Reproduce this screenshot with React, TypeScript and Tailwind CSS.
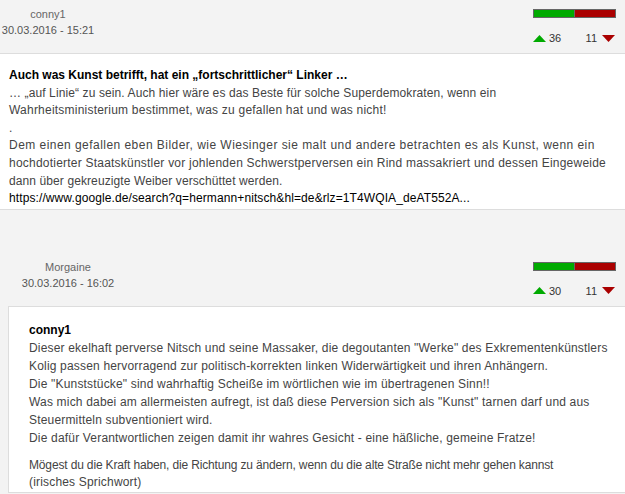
import React from "react"

interface VoteProps {
  up: number
  down: number
}

function Votes({ up, down }: VoteProps) {
  return (
    <div className="flex w-[83px] flex-col">
      <div className="flex h-[9px] w-[83px] border border-[#666]">
        <div className="h-full w-1/2 border-r border-[#666] bg-[#00aa00]"></div>
        <div className="h-full w-1/2 bg-[#aa0000]"></div>
      </div>
      <div className="mt-[13px] flex items-center justify-between text-[11px] leading-[14px] text-[#333]">
        <div className="flex items-center">
          <svg width="13" height="7" viewBox="0 0 13 7">
            <polygon points="0,7 6.5,0 13,7" fill="#00aa00" />
          </svg>
          <span className="ml-[3px]">{up}</span>
        </div>
        <div className="flex items-center">
          <span className="mr-[5px]">{down}</span>
          <svg width="13" height="7" viewBox="0 0 13 7" className="mr-[1px]">
            <polygon points="0,0 13,0 6.5,7" fill="#aa0000" />
          </svg>
        </div>
      </div>
    </div>
  )
}

interface HeaderProps {
  user: string
  date: string
  up: number
  down: number
  indent?: boolean
}

function CommentHeader({ user, date, up, down, indent }: HeaderProps) {
  return (
    <div className="flex h-[53px] items-start justify-between pr-[9px]">
      <div
        className={`${indent ? "ml-[20px]" : ""} flex w-[96px] flex-col items-center pt-[6px] text-[11px] leading-[16px]`}
      >
        <span className="text-[#666]">{user}</span>
        <span className="text-[#555]">{date}</span>
      </div>
      <div className="pt-[9px]">
        <Votes up={up} down={down} />
      </div>
    </div>
  )
}

export default function App() {
  return (
    <div className="h-[494px] w-[625px] overflow-hidden bg-[#f3f3f3] font-['Liberation_Sans',Arial,sans-serif]">
      {/* First comment */}
      <div className="border-b border-[#ddd]">
        <CommentHeader user="conny1" date="30.03.2016 - 15:21" up={36} down={11} />
      </div>
      <div className="whitespace-nowrap border-b border-[#ddd] bg-white px-[9px] pb-[1px] pt-[13px] text-[12px] leading-[17.6px] text-[#444]">
        <div className="font-bold text-black">Auch was Kunst betrifft, hat ein „fortschrittlicher“ Linker …</div>
        <div className="tracking-[0.11px]">… „auf Linie“ zu sein. Auch hier wäre es das Beste für solche Superdemokraten, wenn ein</div>
        <div className="tracking-[0.22px]">Wahrheitsministerium bestimmet, was zu gefallen hat und was nicht!</div>
        <div>.</div>
        <div className="tracking-[0.46px]">Dem einen gefallen eben Bilder, wie Wiesinger sie malt und andere betrachten es als Kunst, wenn ein</div>
        <div className="tracking-[0.22px]">hochdotierter Staatskünstler vor johlenden Schwerstperversen ein Rind massakriert und dessen Eingeweide</div>
        <div className="tracking-[0.1px]">dann über gekreuzigte Weiber verschüttet werden.</div>
        <div className="tracking-[0.1px] text-black">https://www.google.de/search?q=hermann+nitsch&amp;hl=de&amp;rlz=1T4WQIA_deAT552A...</div>
      </div>

      {/* Reply */}
      <div className="pt-[43px]">
        <CommentHeader user="Morgaine" date="30.03.2016 - 16:02" up={30} down={11} indent />
        <div className="ml-[8px] w-[640px] whitespace-nowrap border border-[#ddd] bg-white pl-[20px] pt-[14px] text-[12px] leading-[18px] tracking-[0.18px] text-[#444]">
          <div className="font-bold tracking-normal text-black">conny1</div>
          <p>
            Dieser ekelhaft perverse Nitsch und seine Massaker, die degoutanten "Werke" des Exkrementenkünstlers
            <br />
            Kolig passen hervorragend zur politisch-korrekten linken Widerwärtigkeit und ihren Anhängern.
            <br />
            Die "Kunststücke" sind wahrhaftig Scheiße im wörtlichen wie im übertragenen Sinn!!
            <br />
            Was mich dabei am allermeisten aufregt, ist daß diese Perversion sich als "Kunst" tarnen darf und aus
            <br />
            Steuermitteln subventioniert wird.
            <br />
            Die dafür Verantwortlichen zeigen damit ihr wahres Gesicht - eine häßliche, gemeine Fratze!
          </p>
          <p className="mt-[10px] leading-[17.6px]">
            <span className="tracking-[-0.15px]">
              Mögest du die Kraft haben, die Richtung zu ändern, wenn du die alte Straße nicht mehr gehen kannst
            </span>
            <br />
            (irisches Sprichwort)
          </p>
        </div>
      </div>
    </div>
  )
}
